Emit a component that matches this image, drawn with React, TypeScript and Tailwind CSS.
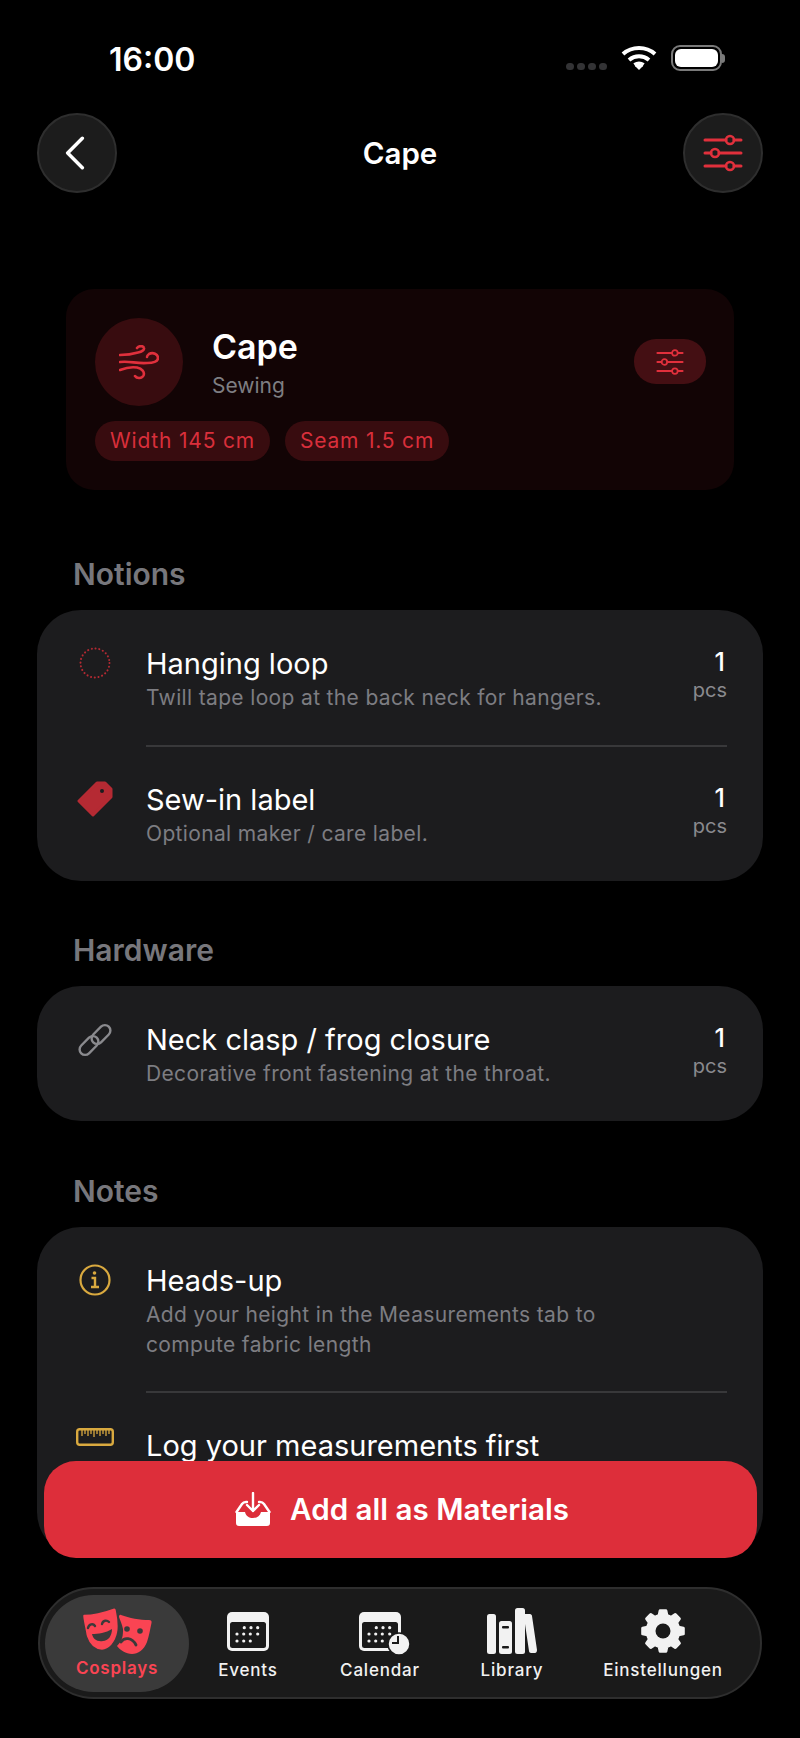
const font = { fontFamily: "Inter, 'Noto Sans', sans-serif" };

function Sliders({ className, w = 2 }: { className?: string; w?: number }) {
  return (
    <svg viewBox="0 0 40 40" className={className} fill="none" stroke="currentColor" strokeLinecap="round">
      <path d="M2 7h21M31 7h7M2 20h6M16 20h22M2 33h21M31 33h7" strokeWidth={w} />
      <circle cx="27" cy="7" r="4" strokeWidth={w - 0.4} />
      <circle cx="12" cy="20" r="4" strokeWidth={w - 0.4} />
      <circle cx="27" cy="33" r="4" strokeWidth={w - 0.4} />
    </svg>
  );
}

function Wind({ className }: { className?: string }) {
  return (
    <svg viewBox="0 0 40 35" className={className} fill="none" stroke="currentColor" strokeWidth="2.600" strokeLinecap="round">
      <path d="M1 10C8 10 14 9 19 7.500C23 6.500 25.500 5 25 3C24.500 .5 20 .5 18 3" />
      <path d="M1 17C10 15.500 18 19 28 18C34 18 39 17 39 13C39 9 34 7 30 9C28.500 10 28 11 28 12" />
      <path d="M1 25C6 23 12 21.500 18 22.500C23 23.500 26 27 24.500 30.500C23 33.500 18 34 16 31" />
    </svg>
  );
}

function Masks({ className }: { className?: string }) {
  return (
    <svg viewBox="0 0 70 47" className={className} fill="currentColor">
      <path d="M39 8C47 11 58 13 67 13C69 13 70 14 69.500 16C68 23 67 29 65 35C62 43 56 47 50 47C44 47 38 43 35 39C41 33 41 28 41 22C40 17 38 13 37 10C37 8 38 7.500 39 8Z" />
      <path d="M2 7C11 7 23 4 31 1C33 .5 34 1 34.500 3C36 10 37 18 36 25C34 36 27 43 20 43.500C13 43 7 38 4 29C3 22 1 15 .5 9C.5 8 1 7 2 7Z" stroke="#3a3a3a" strokeWidth="1.500" />
      <path d="M6 21C7 17 11 16 13 19M20 17C21 13 25 13 27 15" stroke="#3a3a3a" strokeWidth="2.400" fill="none" strokeLinecap="round" />
      <path d="M10 27C16 27 24 26 30 22C30 29 26 34 21 34C15 35 11 32 10 27Z" fill="#3a3a3a" />
      <circle cx="45" cy="22" r="2.800" fill="#3a3a3a" />
      <circle cx="58" cy="24" r="2.800" fill="#3a3a3a" />
      <path d="M39 35C42 30 50 30 54 38" stroke="#3a3a3a" strokeWidth="2.800" fill="none" strokeLinecap="round" />
    </svg>
  );
}

function CalendarShape() {
  const dots = [
    [17.3, 15.7], [24, 15.7], [30.7, 15.7],
    [10, 22], [16.7, 22], [23.3, 22], [30.7, 22],
    [10, 29], [16.7, 29], [23.3, 29],
  ];
  return (
    <>
      <rect x="0" y="0" width="42" height="39" rx="5" fill="#f2f2f2" />
      <rect x="3" y="10" width="36" height="26" rx="2.500" fill="#1a1a1a" />
      {dots.map(([x, y]) => (
        <circle key={x + "-" + y} cx={x} cy={y} r="1.600" fill="#f2f2f2" />
      ))}
    </>
  );
}

function Gear({ className }: { className?: string }) {
  const pt = (r: number, deg: number) => {
    const a = ((deg - 90) * Math.PI) / 180;
    return (23 + r * Math.cos(a)).toFixed(1) + " " + (23 + r * Math.sin(a)).toFixed(1);
  };
  const points = Array.from({ length: 8 }, (_, i) => {
    const a = i * 45;
    return [pt(16, a - 14), pt(20.5, a - 8), pt(20.5, a + 8), pt(16, a + 14)].join(" ");
  }).join(" ");
  return (
    <svg viewBox="0 0 46 46" className={className}>
      <polygon points={points} fill="#f2f2f2" stroke="#f2f2f2" strokeWidth="3" strokeLinejoin="round" />
      <circle cx="23" cy="23" r="7.500" fill="#1a1a1a" />
    </svg>
  );
}

function Row({ icon, title, sub, qty }: { icon: React.ReactNode; title: string; sub?: string; qty?: boolean }) {
  return (
    <div className="flex">
      <div className="w-[109px] shrink-0 flex justify-center pl-[7px] pt-[1px]">{icon}</div>
      <div className="flex-1">
        <div className="text-[29px] leading-[36px] text-white">{title}</div>
        {sub && <div className="text-[21px] leading-[30px] tracking-[0.35px] text-[#7d7d82] whitespace-pre-line mt-[1px]">{sub}</div>}
      </div>
      {qty && (
        <div className="w-[60px] text-right mr-[36px]">
          <div className="text-[25px] leading-[30px] font-medium text-white mt-[1px] mr-[2px]">1</div>
          <div className="text-[20px] leading-[26px] text-[#8a8a8e]">pcs</div>
        </div>
      )}
    </div>
  );
}

function Section({ title, className, children }: { title: string; className?: string; children: React.ReactNode }) {
  return (
    <div>
      <div className="ml-[73px] text-[30px] leading-[36px] font-semibold text-[#77777c]">{title}</div>
      <div className={"mx-[37px] mt-[18px] bg-[#1c1c1e] rounded-[44px] " + className}>{children}</div>
    </div>
  );
}

function Tab({ label, width, children }: { label: string; width: string; children: React.ReactNode }) {
  return (
    <div className={"flex flex-col items-center " + width}>
      <div className="h-[46px] flex items-end justify-center">{children}</div>
      <div className="mt-[7px] text-[17px] leading-[24px] tracking-[0.8px] font-medium text-[#f2f2f2]">{label}</div>
    </div>
  );
}

export default function App() {
  return (
    <div className="relative w-[800px] h-[1738px] bg-black overflow-hidden" style={font}>
      {/* Status bar */}
      <div className="h-[113px] flex justify-between pl-[109px] pr-[75px] pt-[38px]">
        <div className="text-[32px] leading-[40px] font-semibold text-white mt-[2px]">16:00</div>
        <div className="flex items-center gap-[14px] h-[40px]">
          <div className="flex gap-[3px] mt-[16px]">
            <span className="w-[8px] h-[7px] rounded-full bg-[#333335]" />
            <span className="w-[8px] h-[7px] rounded-full bg-[#333335]" />
            <span className="w-[8px] h-[7px] rounded-full bg-[#333335]" />
            <span className="w-[8px] h-[7px] rounded-full bg-[#333335]" />
          </div>
          <svg viewBox="0 0 36 26" className="w-[36px] h-[26px]" fill="none" stroke="#fff" strokeWidth="4">
            <path d="M2 9c9-8 23-8 32 0M8 15c6-5 14-5 20 0M13.500 20c3-2 6-2 9 0" />
            <path d="M18 25l-4-4c2-2 6-2 8 0z" fill="#fff" stroke="none" />
          </svg>
          <div className="flex items-center">
            <div className="w-[51px] h-[26px] rounded-[9px] border-2 border-[#7a7a7a] p-[2px]">
              <div className="w-full h-full rounded-[6px] bg-white" />
            </div>
            <div className="w-[3px] h-[9px] rounded-r-full bg-[#7a7a7a]" />
          </div>
        </div>
      </div>

      {/* Nav */}
      <div className="h-[80px] mx-[37px] flex items-center justify-between">
        <div className="w-[80px] h-[80px] rounded-full bg-[#1c1c1c] border-2 border-[#2e2e2e] flex items-center justify-center">
          <svg viewBox="0 0 24 36" className="w-[22px] h-[34px] -ml-[4px]" fill="none" stroke="#fff" strokeWidth="3.800" strokeLinecap="round" strokeLinejoin="round">
            <path d="M20 2L4 18l16 16" />
          </svg>
        </div>
        <div className="text-[29.500px] font-semibold text-white">Cape</div>
        <div className="w-[80px] h-[80px] rounded-full bg-[#1c1c1c] border-2 border-[#2e2e2e] flex items-center justify-center text-[#e0303c]">
          <Sliders className="w-[40px] h-[40px]" w={3} />
        </div>
      </div>

      {/* Header card */}
      <div className="mx-[66px] mt-[96px] h-[201px] rounded-[28px] bg-[#120405] pl-[29px] pr-[28px] pt-[29px]">
        <div className="flex">
          <div className="w-[88px] h-[88px] rounded-full bg-[#380c0f] flex items-center justify-center text-[#e0303c]">
            <Wind className="w-[40px] h-[35px]" />
          </div>
          <div className="ml-[29px] flex-1">
            <div className="text-[34px] leading-[42px] font-semibold text-white mt-[8px]">Cape</div>
            <div className="text-[21px] leading-[28px] text-[#7e7e82] mt-[4px]">Sewing</div>
          </div>
          <div className="w-[72px] h-[45px] mt-[21px] rounded-[22px] bg-[#440f13] flex items-center justify-center text-[#e0303c]">
            <Sliders className="w-[28px] h-[28px]" w={2.800} />
          </div>
        </div>
        <div className="flex gap-[15px] mt-[15px]">
          <div className="h-[40px] px-[15px] rounded-full bg-[#380c0f] text-[#d92f3b] text-[21px] tracking-[0.8px] leading-[40px]">Width 145 cm</div>
          <div className="h-[40px] px-[15px] rounded-full bg-[#380c0f] text-[#d92f3b] text-[21px] tracking-[0.8px] leading-[40px]">Seam 1.5 cm</div>
        </div>
      </div>

      {/* Notions */}
      <div className="mt-[66px]">
        <Section title="Notions" className="pt-[36px] h-[271px]">
          <Row
            title="Hanging loop"
            sub="Twill tape loop at the back neck for hangers."
            qty
            icon={
              <svg viewBox="0 0 32 32" className="w-[32px] h-[32px]" fill="none">
                <circle cx="16" cy="16" r="14.500" stroke="#b52a33" strokeWidth="2" strokeDasharray="0.1 3.700" strokeLinecap="round" />
              </svg>
            }
          />
          <div className="ml-[109px] mr-[36px] mt-[32px] mb-[35px] h-[2px] bg-[#38383a]" />
          <Row
            title="Sew-in label"
            sub="Optional maker / care label."
            qty
            icon={
              <svg viewBox="0 0 36 36" className="w-[36px] h-[36px] -mt-[2px]" fill="#b52a33" stroke="#b52a33" strokeWidth="3" strokeLinejoin="round">
                <path d="M20 2H28L34 8V16L16 34L2 20Z" />
                <circle cx="25" cy="10" r="2" fill="#1c1c1e" stroke="none" />
              </svg>
            }
          />
        </Section>
      </div>

      {/* Hardware */}
      <div className="mt-[51px]">
        <Section title="Hardware" className="pt-[36px] h-[135px]">
          <Row
            title="Neck clasp / frog closure"
            sub="Decorative front fastening at the throat."
            qty
            icon={
              <svg viewBox="0 0 34 34" className="w-[34px] h-[34px]" fill="none" stroke="#8a8a8e" strokeWidth="2.400">
                <rect x="12" y="6" width="22" height="11" rx="5.500" transform="rotate(-45 23 11.500)" />
                <rect x="0" y="17" width="22" height="11" rx="5.500" transform="rotate(-45 11 22.500)" />
              </svg>
            }
          />
        </Section>
      </div>

      {/* Notes */}
      <div className="mt-[52px]">
        <Section title="Notes" className="pt-[36px] h-[329px]">
          <Row
            title="Heads-up"
            sub={"Add your height in the Measurements tab to\ncompute fabric length"}
            icon={
              <svg viewBox="0 0 32 32" className="w-[32px] h-[32px]" fill="none" stroke="#d9a93f" strokeWidth="2.200">
                <circle cx="16" cy="16" r="14.500" />
                <circle cx="15.500" cy="9" r="1.800" fill="#d9a93f" stroke="none" />
                <path d="M12.500 14H16v9M12 23h8" strokeWidth="2.400" />
              </svg>
            }
          />
          <div className="ml-[109px] mr-[36px] mt-[31px] mb-[35px] h-[2px] bg-[#38383a]" />
          <Row
            title="Log your measurements first"
            icon={
              <svg viewBox="0 0 38 18" className="w-[38px] h-[18px] -mt-[1px]" fill="none" stroke="#d9a93f">
                <rect x="1.200" y="1.200" width="35.600" height="15.600" rx="2.500" strokeWidth="2.400" />
                <path d="M6 2v6M9 2v4M12 2v6M15 2v4M18 2v7M21 2v4M24 2v6M27 2v4M30 2v6M33 2v4" strokeWidth="1.300" />
              </svg>
            }
          />
        </Section>
      </div>

      {/* Add button */}
      <div className="absolute left-[44px] top-[1461px] w-[713px] h-[97px] rounded-[32px] bg-[#dd2e3a] flex items-center justify-center gap-[19px] pl-[3px]">
        <svg viewBox="0 0 36 35" className="w-[36px] h-[35px]">
          <path d="M1 20H10C11 24 14 26 18 26C22 26 25 24 26 20H35V31C35 33 34 34 32 34H4C2 34 1 33 1 31Z" fill="#fff" />
          <path d="M1.500 20L7 12C8 10.500 9 10 11 10H12M34.500 20L29 12C28 10.500 27 10 25 10H24M18 1V19M12 13L18 19L24 13" stroke="#fff" strokeWidth="2.400" fill="none" strokeLinecap="round" strokeLinejoin="round" />
        </svg>
        <span className="text-[29.600px] font-semibold text-white">Add all as Materials</span>
      </div>

      {/* Tab bar */}
      <div className="absolute left-[38px] top-[1587px] w-[724px] h-[112px] rounded-full bg-[#1a1a1a] border-2 border-[#2e2e2e] flex items-center pl-[5px]">
        <div className="w-[144px] h-[97px] rounded-full bg-[#3a3a3a] flex flex-col items-center text-[#fa4453] pt-[12px]">
          <Masks className="w-[70px] h-[47px]" />
          <div className="mt-[2px] text-[17px] leading-[24px] tracking-[0.75px] font-semibold">Cosplays</div>
        </div>
        <Tab label="Events" width="w-[118px]">
          <svg viewBox="0 0 42 39" className="w-[42px] h-[39px]">
            <CalendarShape />
          </svg>
        </Tab>
        <Tab label="Calendar" width="w-[146px]">
          <svg viewBox="0 0 54 44" className="w-[54px] h-[44px] -mb-[5px] translate-x-[6px]">
            <CalendarShape />
            <circle cx="40" cy="32" r="11" fill="#f2f2f2" stroke="#1a1a1a" strokeWidth="1.500" />
            <path d="M39 24v7h-6" stroke="#1a1a1a" strokeWidth="2" fill="none" />
          </svg>
        </Tab>
        <Tab label="Library" width="w-[118px]">
          <svg viewBox="0 0 50 46" className="w-[50px] h-[46px] -mb-[3px]">
            <rect x="0" y="6" width="9" height="40" rx="2.500" fill="#f2f2f2" />
            <rect x="12" y="13" width="13" height="33" rx="2.500" fill="#f2f2f2" />
            <rect x="15" y="18" width="7" height="2.400" rx="1" fill="#1a1a1a" />
            <rect x="15" y="38" width="7" height="2.400" rx="1" fill="#1a1a1a" />
            <rect x="28" y="0" width="10" height="46" rx="2.500" fill="#f2f2f2" />
            <path d="M38 6H43C44 6 45 7 45 8L50 42C50 44 49 45 48 45H44C43 45 42 44 42 43L38 16Z" fill="#f2f2f2" />
          </svg>
        </Tab>
        <Tab label="Einstellungen" width="w-[184px]">
          <Gear className="w-[46px] h-[46px] -mb-[3px]" />
        </Tab>
      </div>
    </div>
  );
}
